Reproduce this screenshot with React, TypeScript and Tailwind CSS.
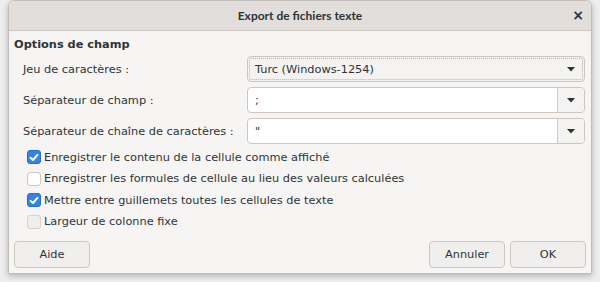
import React from 'react';

const font = { fontFamily: '"DejaVu Sans", "Liberation Sans", sans-serif' };
const titleFont = { fontFamily: 'Lato, "Noto Sans", sans-serif' };

function Arrow() {
  return (
    <svg width="8" height="5" viewBox="0 0 8 5" className="shrink-0">
      <path d="M0 0 L8 0 L4 4.5 Z" fill="#2e3436" />
    </svg>
  );
}

function Check({ checked, disabled }: { checked?: boolean; disabled?: boolean }) {
  if (checked) {
    return (
      <span className="w-[14px] h-[14px] rounded-[3px] bg-[#3584e4] border border-[#1c71d8] flex items-center justify-center shrink-0">
        <svg width="10" height="9" viewBox="0 0 10 9">
          <path d="M1.5 4.8 L4 7 L8.5 1.8" stroke="white" strokeWidth="2" fill="none" strokeLinecap="round" strokeLinejoin="round" />
        </svg>
      </span>
    );
  }
  return (
    <span
      className={
        'w-[14px] h-[14px] rounded-[3px] border shrink-0 ' +
        (disabled ? 'bg-[#efeeec] border-[#d6d2ce]' : 'bg-white border-[#cdc7c2]')
      }
    />
  );
}

function Entry({ value }: { value: string }) {
  return (
    <div className="flex h-[26px] w-[338px] border border-[#cdc7c2] rounded-[4px] bg-white overflow-hidden">
      <div className="flex-1 px-[7px] flex items-center text-[#2e3436]">{value}</div>
      <div className="w-[27px] border-l border-[#cdc7c2] bg-[#f4f3f2] flex items-center justify-center">
        <Arrow />
      </div>
    </div>
  );
}

const rows = [
  { label: 'Enregistrer le contenu de la cellule comme affiché', checked: true },
  { label: 'Enregistrer les formules de cellule au lieu des valeurs calculées' },
  { label: 'Mettre entre guillemets toutes les cellules de texte', checked: true },
  { label: 'Largeur de colonne fixe', disabled: true },
];

export default function App() {
  return (
    <div className="w-[600px] h-[282px] bg-[#eeeeee] flex justify-center text-[11.33px] text-[#2e3436]" style={font}>
      <div className="w-[584px] h-[274px] flex flex-col rounded-t-[7px] bg-[#f6f5f4] border border-[#c0bdb9] shadow-[0_2px_6px_rgba(0,0,0,0.25)] overflow-hidden">
        <div className="h-[30px] shrink-0 flex items-center bg-[#e1dedb] border-b border-[#cdc7c2] relative">
          <div className="flex-1 text-center font-bold text-[12px]" style={titleFont}>Export de fichiers texte</div>
          <div className="absolute right-[7px] top-[7px] text-[14px] font-bold leading-none">×</div>
        </div>
        <div className="flex-1 flex flex-col px-[5px] pt-[4px] pb-[5px]">
          <div className="font-bold leading-[18px]">Options de champ</div>
          <div className="grid grid-cols-[224px_338px] gap-y-[5px] items-center pl-[9px] mt-[3px]">
            <div>Jeu de caractères :</div>
            <div className="flex h-[26px] items-center justify-between px-[7px] border border-[#cdc7c2] rounded-[4px] bg-[#f4f3f2] outline-1 outline-dotted outline-[#b8b4b0] -outline-offset-[3px]">
              <span>Turc (Windows-1254)</span>
              <span className="pr-[2px]"><Arrow /></span>
            </div>
            <div>Séparateur de champ :</div>
            <Entry value=";" />
            <div>Séparateur de chaîne de caractères :</div>
            <Entry value={'"'} />
          </div>
          <div className="flex flex-col gap-[7.5px] mt-[6px] pl-[13px]">
            {rows.map((r, i) => (
              <div key={i} className="flex items-center gap-[2px] h-[14px]">
                <Check checked={r.checked} disabled={r.disabled} />
                <span className="ml-[1px]">{r.label}</span>
              </div>
            ))}
          </div>
          <div className="mt-auto flex justify-between">
            <button className="w-[76px] h-[27px] border border-[#cdc7c2] rounded-[4px] bg-[#f0efee]">Aide</button>
            <div className="flex gap-[5px]">
              <button className="w-[76px] h-[27px] border border-[#cdc7c2] rounded-[4px] bg-[#f0efee]">Annuler</button>
              <button className="w-[76px] h-[27px] border border-[#cdc7c2] rounded-[4px] bg-[#f0efee]">OK</button>
            </div>
          </div>
        </div>
      </div>
    </div>
  );
}
